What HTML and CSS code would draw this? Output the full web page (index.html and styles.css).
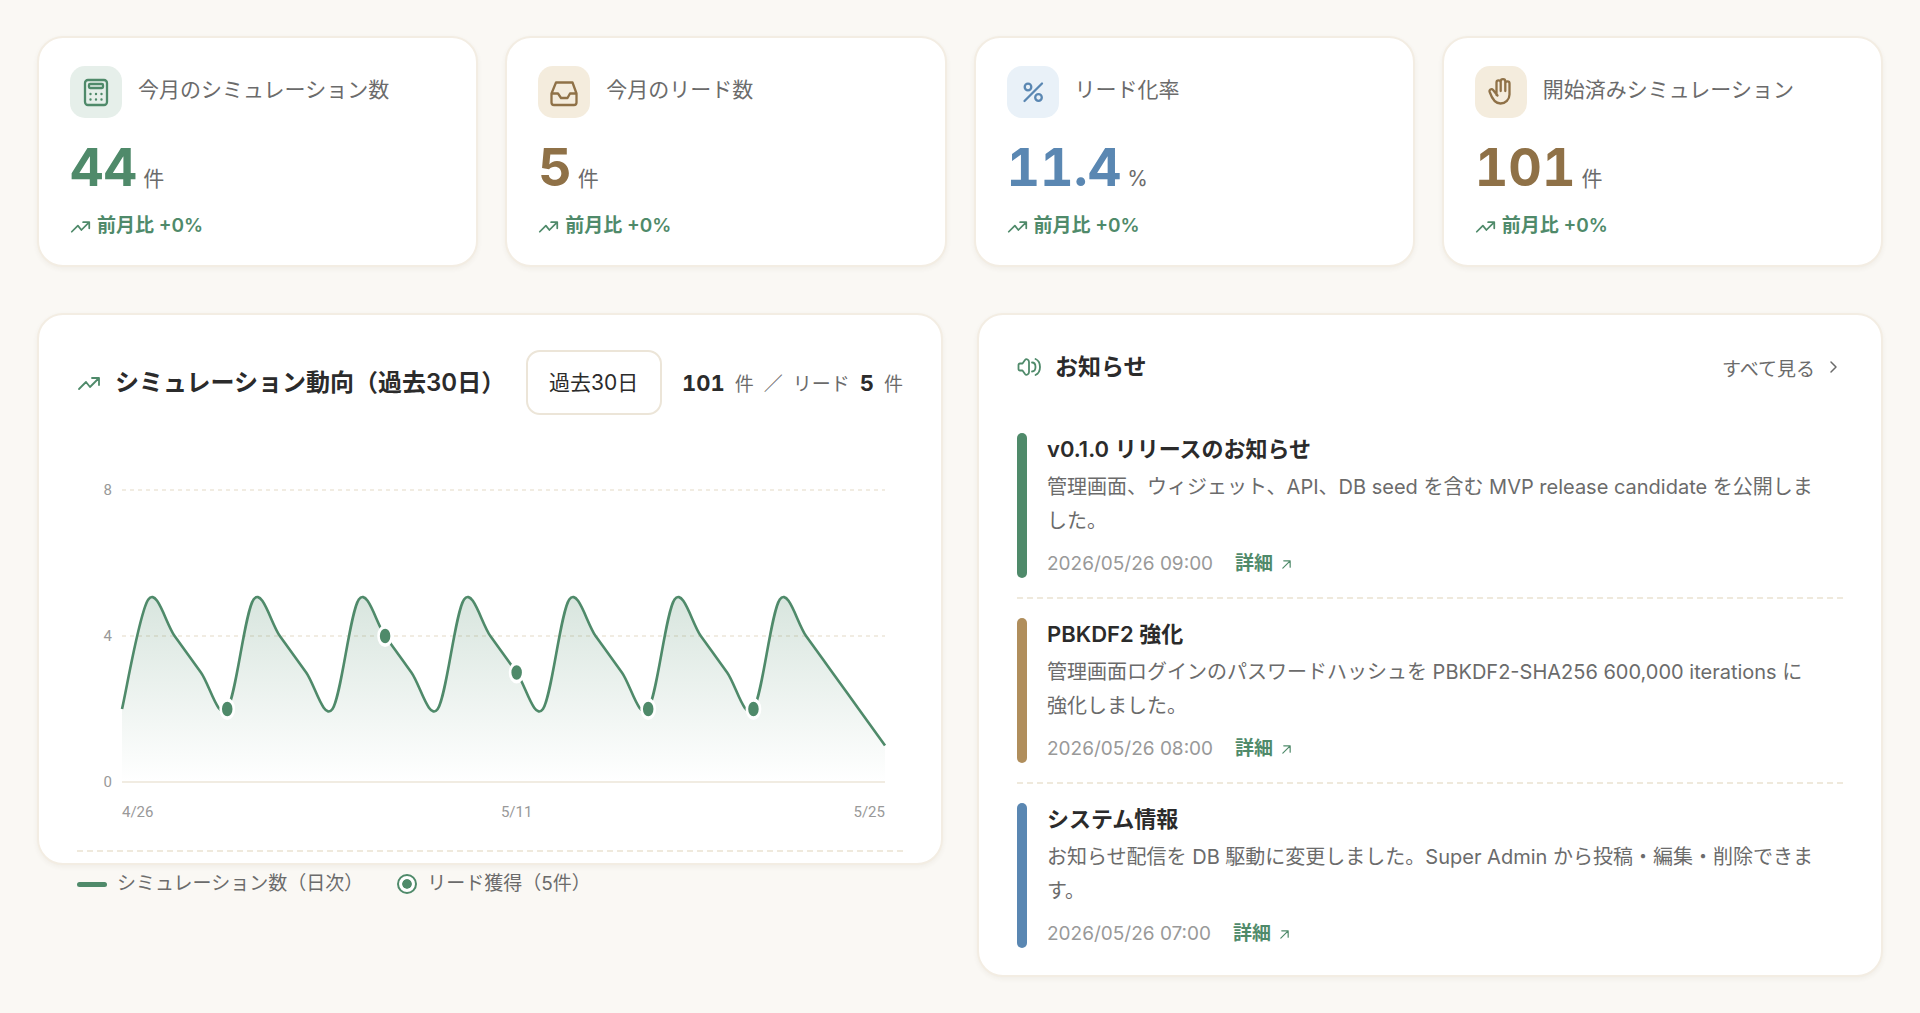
FILE: index.html
```
<!DOCTYPE html>
<html lang="ja">
<head>
<meta charset="UTF-8">
<meta name="viewport" content="width=device-width, initial-scale=1.0">
<title>ダッシュボード</title>
<link rel="stylesheet" href="styles.css">
</head>
<body>
  <!-- shared icons -->
  <svg class="sprite" aria-hidden="true">
    <symbol id="trend" viewBox="0 0 24 24">
      <path d="M2 18l7-7 4 5 9-9M15 7h7v7"/>
    </symbol>
    <symbol id="arrow" viewBox="0 0 12 12">
      <path d="M2 10l8-8M3 2h7v7"/>
    </symbol>
  </svg>

  <main class="dashboard">
    <section class="stats">
      <article class="card stat green">
        <div class="stat-head">
          <span class="stat-icon">
            <svg viewBox="0 0 52 52"><rect x="15" y="14" width="22" height="25" rx="3"/><rect x="19" y="18" width="14" height="4" rx="1"/><path class="dots" d="M20.500 28h0M26 28h0M31.500 28h0M20.500 33.500h0M26 33.500h0M31.500 33.500h0"/></svg>
          </span>
          <h3>今月のシミュレーション数</h3>
        </div>
        <p class="stat-value"><strong>44</strong> <span>件</span></p>
        <p class="stat-trend"><svg><use href="#trend"/></svg>前月比 +0%</p>
      </article>
      <article class="card stat brown">
        <div class="stat-head">
          <span class="stat-icon">
            <svg viewBox="0 0 52 52"><path d="M18 16.500H34.500L38.500 27.500V36.500a2.500 2.500 0 0 1-2.500 2.500H16a2.500 2.500 0 0 1-2.500-2.500V27.500zM13.500 27.500H20L23 32H29.500L32 27.500H38.500"/></svg>
          </span>
          <h3>今月のリード数</h3>
        </div>
        <p class="stat-value"><strong>5</strong> <span>件</span></p>
        <p class="stat-trend"><svg><use href="#trend"/></svg>前月比 +0%</p>
      </article>
      <article class="card stat blue">
        <div class="stat-head">
          <span class="stat-icon">
            <svg viewBox="0 0 52 52"><circle cx="21" cy="21" r="3.300"/><circle cx="31.500" cy="31.500" r="3.300"/><path d="M17.500 35L35 17.500"/></svg>
          </span>
          <h3>リード化率</h3>
        </div>
        <p class="stat-value"><strong>11.4</strong> <span>%</span></p>
        <p class="stat-trend"><svg><use href="#trend"/></svg>前月比 +0%</p>
      </article>
      <article class="card stat brown">
        <div class="stat-head">
          <span class="stat-icon">
            <svg viewBox="0 0 52 52"><path d="M21.500 29V16.500a2.100 2.100 0 0 1 4.200 0V25M25.700 25V15.500a2.300 2.300 0 0 1 4.600 0V25M30.300 25V17.500a2.100 2.100 0 0 1 4.200 0V28.500a9 9 0 0 1-9 9C20.500 37.500 17.500 34 14.900 26.500a2 2 0 0 1 3.200-2.500L22.500 29.500"/></svg>
          </span>
          <h3>開始済みシミュレーション</h3>
        </div>
        <p class="stat-value"><strong>101</strong> <span>件</span></p>
        <p class="stat-trend"><svg><use href="#trend"/></svg>前月比 +0%</p>
      </article>
    </section>

    <section class="panels">
      <article class="card panel chart-panel">
        <header class="chart-head">
          <h2><svg><use href="#trend"/></svg>シミュレーション動向（過去30日）</h2>
          <select aria-label="期間">
            <option>過去30日</option>
          </select>
          <p class="summary"><strong>101</strong> <span>件</span> <span>／</span> <span>リード</span> <strong>5</strong> <span>件</span></p>
        </header>
        <div class="chart">
          <div class="y-axis"><span>8</span><span>4</span><span>0</span></div>
          <svg class="plot" viewBox="0 0 580 160" preserveAspectRatio="none">
            <defs>
              <linearGradient id="fade" x1="0" y1="0" x2="0" y2="1">
                <stop offset="0" stop-color="#4f8a6a" stop-opacity="0.22"/>
                <stop offset="1" stop-color="#4f8a6a" stop-opacity="0"/>
              </linearGradient>
            </defs>
            <path class="grid-line" d="M0 0H580M0 80H580"/>
            <path class="base-line" d="M0 160H580"/>
            <path id="area" fill="url(#fade)"/>
            <path id="line" class="line"/>
            <g id="leads" class="leads"></g>
          </svg>
          <div class="x-axis"><span>4/26</span><span>5/11</span><span>5/25</span></div>
        </div>
        <footer class="legend">
          <span><i class="key-line"></i>シミュレーション数（日次）</span>
          <span><i class="key-dot"></i>リード獲得（5件）</span>
        </footer>
      </article>

      <article class="card panel news-panel">
        <header class="news-head">
          <h2>
            <svg viewBox="0 0 24 24"><path d="M1.500 10q0-1.500 1.500-1.500h2.500L8 5q1-1.300 2.500-.5 1.500.8 1.500 2.500v10q0 1.700-1.500 2.500-1.500.8-2.500-.5L5.500 15.500H3q-1.500 0-1.500-1.500zM15 7.500q3.500 0 3.500 4.500T15 16.500M18.500 4q4.500 2 4.500 8t-4.500 8"/></svg>お知らせ
          </h2>
          <a class="all" href="#">すべて見る<svg viewBox="0 0 20 20"><path d="M8 5l5 5-5 5"/></svg></a>
        </header>
        <ul class="news">
          <li class="green">
            <div>
              <h3>v0.1.0 リリースのお知らせ</h3>
              <p>管理画面、ウィジェット、API、DB seed を含む MVP release candidate を公開しました。</p>
              <div class="news-meta"><time>2026/05/26 09:00</time><a href="#">詳細<svg><use href="#arrow"/></svg></a></div>
            </div>
          </li>
          <li class="tan">
            <div>
              <h3>PBKDF2 強化</h3>
              <p>管理画面ログインのパスワードハッシュを PBKDF2-SHA256 600,000 iterations に強化しました。</p>
              <div class="news-meta"><time>2026/05/26 08:00</time><a href="#">詳細<svg><use href="#arrow"/></svg></a></div>
            </div>
          </li>
          <li class="blue">
            <div>
              <h3>システム情報</h3>
              <p>お知らせ配信を DB 駆動に変更しました。Super Admin から投稿・編集・削除できます。</p>
              <div class="news-meta"><time>2026/05/26 07:00</time><a href="#">詳細<svg><use href="#arrow"/></svg></a></div>
            </div>
          </li>
        </ul>
      </article>
    </section>
  </main>

  <script>
    const daily = [2, 5, 4, 3, 2, 5, 4, 3, 2, 5, 4, 3, 2, 5, 4, 3, 2, 5, 4, 3, 2, 5, 4, 3, 2, 5, 4, 3, 2, 1];
    const leadDays = [4, 10, 15, 20, 24];
    const points = daily.map((value, i) => [i * 20, 160 - value * 20]);

    // smooth curve through every day
    let d = `M${points[0]}`;
    for (let i = 0; i < points.length - 1; i++) {
      const p0 = points[i - 1] || points[i];
      const p1 = points[i];
      const p2 = points[i + 1];
      const p3 = points[i + 2] || p2;
      d += ` C${p1[0] + (p2[0] - p0[0]) / 6},${p1[1] + (p2[1] - p0[1]) / 6}`;
      d += ` ${p2[0] - (p3[0] - p1[0]) / 6},${p2[1] - (p3[1] - p1[1]) / 6} ${p2}`;
    }
    document.getElementById('line').setAttribute('d', d);
    document.getElementById('area').setAttribute('d', d + ' V160 H0 Z');
    document.getElementById('leads').innerHTML = leadDays
      .map(day => `<circle cx="${points[day][0]}" cy="${points[day][1]}" r="5"/>`)
      .join('');
  </script>
</body>
</html>
```
FILE: styles.css
```
* {
  box-sizing: border-box;
}

body {
  margin: 0;
  background-color: #faf8f4;
  color: #2b2b2b;
  font-family: Inter, "Noto Sans CJK JP", sans-serif;
  font-size: 19px;
}

h2,
h3,
p,
ul {
  margin: 0;
  padding: 0;
}

svg {
  fill: none;
  stroke: currentColor;
  stroke-width: 2;
  stroke-linecap: round;
  stroke-linejoin: round;
  flex-shrink: 0;
}

a {
  text-decoration: none;
}

.sprite {
  position: absolute;
  width: 0;
  height: 0;
}

.dashboard {
  padding: 36px 37px;
}

.card {
  background-color: #fff;
  border: 2px solid #f3ede3;
  border-radius: 26px;
  box-shadow: 0 2px 5px rgba(90, 70, 40, 0.06);
}

.green {
  --color: #4f8a6a;
  --tint: #e6efea;
}

.brown {
  --color: #8f7147;
  --tint: #f4ecdd;
}

.blue {
  --color: #5a87b2;
  --tint: #e9f1f8;
}

.tan {
  --color: #b08e5c;
}

/* stat cards */
.stats {
  display: grid;
  grid-template-columns: repeat(4, 1fr);
  gap: 27px;
  margin-bottom: 46px;
}

.stat {
  padding: 28px 31px 24px;
}

.stat-head {
  display: flex;
  gap: 16px;
}

.stat-icon {
  width: 52px;
  height: 52px;
  border-radius: 15px;
  background-color: var(--tint);
  color: var(--color);
}

.stat-icon svg {
  display: block;
  stroke-width: 2.3;
}

.dots {
  stroke-width: 2.4;
}

.stat h3 {
  color: #6b6b6b;
  font-size: 21px;
  font-weight: 400;
  line-height: 48px;
}

.stat-value {
  margin-top: 20px;
  color: #6b6b6b;
  font-size: 21px;
  line-height: 60px;
}

.stat-value strong {
  color: var(--color);
  font-size: 52px;
  font-weight: 700;
  font-variant-numeric: tabular-nums;
}

.stat-trend {
  display: flex;
  align-items: center;
  gap: 6px;
  margin-top: 2px;
  color: #4f8a6a;
  font-weight: 600;
  line-height: 30px;
}

.stat-trend svg {
  width: 21px;
  height: 21px;
}

/* panels */
.panels {
  display: grid;
  grid-template-columns: 1fr 1fr;
  gap: 34px;
  align-items: start;
}

.panel {
  padding: 35px 38px 27px;
}

.panel h2 {
  display: flex;
  align-items: center;
  gap: 14px;
  font-size: 23px;
  font-weight: 600;
  line-height: 34px;
  white-space: nowrap;
}

.panel h2 svg {
  width: 24px;
  height: 24px;
  color: #4f8a6a;
  stroke-width: 1.8;
}

/* the legend hangs below the card */
.chart-panel {
  height: 552px;
}

.chart-head {
  display: flex;
  align-items: center;
  gap: 20px;
}

.chart-head h2 {
  margin-right: auto;
  font-size: 24px;
}

.chart-head select {
  appearance: none;
  padding: 16px 21px;
  border: 2px solid #ece5d8;
  border-radius: 14px;
  background-color: #fff;
  color: #2b2b2b;
  font-family: inherit;
  font-size: 21px;
  line-height: 29px;
}

.summary {
  display: flex;
  align-items: baseline;
  gap: 10px;
  color: #6b6b6b;
  white-space: nowrap;
}

.summary strong {
  color: #2b2b2b;
  font-size: 22px;
  font-weight: 700;
  font-variant-numeric: tabular-nums;
}

.chart {
  display: grid;
  grid-template-columns: 35px 1fr;
  column-gap: 10px;
  row-gap: 20px;
  margin-top: 75px;
  padding-right: 18px;
  color: #999;
  font-family: Roboto, sans-serif;
  font-size: 15px;
  line-height: 20px;
}

.y-axis {
  display: flex;
  flex-direction: column;
  justify-content: space-between;
  margin: -10px 0;
  text-align: right;
}

.plot {
  width: 100%;
  height: 292px;
  overflow: visible;
  stroke: none;
}

.grid-line,
.base-line,
.line {
  vector-effect: non-scaling-stroke;
  stroke: #f1ece2;
  stroke-linecap: butt;
}

.grid-line {
  stroke-dasharray: 4 4;
}

.line {
  stroke: #4f8a6a;
  stroke-width: 2.6;
}

.leads {
  fill: #4f8a6a;
  stroke: #fff;
}

/* 5/11 is day 15 of 29 */
.x-axis {
  grid-column: 2;
  display: grid;
  grid-template-columns: 8fr 14fr 7fr;
}

.x-axis span:nth-child(2) {
  text-align: center;
}

.x-axis span:last-child {
  text-align: right;
}

.legend {
  display: flex;
  gap: 34px;
  margin-top: 28px;
  padding-top: 17px;
  border-top: 2px dashed #efe9dc;
  color: #6b6b6b;
  line-height: 30px;
}

.legend span {
  display: flex;
  align-items: center;
  gap: 10px;
}

.key-line {
  width: 30px;
  height: 5px;
  border-radius: 3px;
  background-color: #4f8a6a;
}

.key-dot {
  width: 20px;
  height: 20px;
  border: 2px solid #4f8a6a;
  border-radius: 50%;
  background: #4f8a6a content-box;
  padding: 3px;
  box-shadow: inset 0 0 0 3px #fff;
}

/* news */
.news-head {
  display: flex;
  align-items: center;
  justify-content: space-between;
  margin-bottom: 30px;
}

.all {
  display: flex;
  align-items: center;
  gap: 8px;
  color: #6b6b6b;
}

.all svg {
  width: 20px;
  height: 20px;
  stroke-width: 1.5;
}

.news {
  list-style: none;
}

.news li {
  display: flex;
  gap: 20px;
  padding: 19px 0;
}

.news li + li {
  border-top: 2px dashed #efe9dc;
}

.news li:last-child {
  padding-bottom: 0;
}

.news li::before {
  content: "";
  flex: 0 0 10px;
  border-radius: 5px;
  background-color: var(--color);
}

.news h3 {
  font-size: 22px;
  font-weight: 600;
  line-height: 32px;
}

.news p {
  margin: 5px 0 12px;
  padding-right: 27px;
  color: #6b6b6b;
  font-size: 20px;
  line-height: 34px;
}

.news-meta {
  display: flex;
  gap: 22px;
  line-height: 28px;
}

.news-meta time {
  color: #999;
}

.news-meta a {
  display: flex;
  align-items: center;
  gap: 8px;
  color: #4f8a6a;
  font-weight: 600;
}

.news-meta a svg {
  width: 11px;
  height: 11px;
  stroke-width: 1.3;
}
```
